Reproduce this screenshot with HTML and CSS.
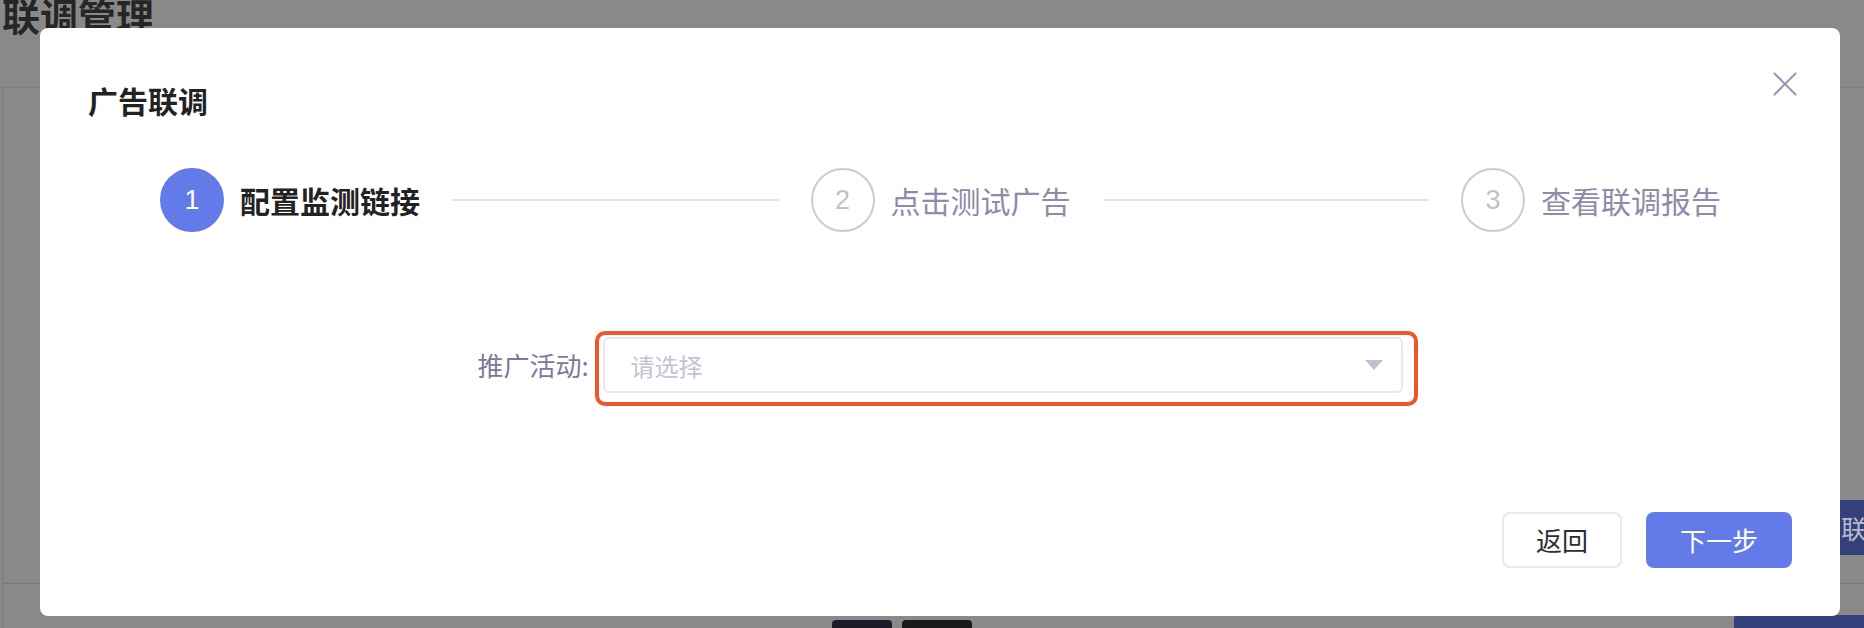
FILE: index.html
```html
<!DOCTYPE html>
<html lang="zh-CN">
<head>
<meta charset="utf-8">
<title>联调管理</title>
<link rel="stylesheet" href="styles.css">
</head>
<body>
<div class="page">
  <h1 class="page-title">联调管理</h1>
  <div class="card">
    <div class="toolbar">
      <button class="bg-btn">联调报告</button>
    </div>
    <div class="bg-row"></div>
    <div class="bg-bottom">
      <span class="bg-dark bg-dark-a"></span>
      <span class="bg-dark bg-dark-b"></span>
      <span class="bg-blue"></span>
    </div>
  </div>

  <div class="modal">
    <h2 class="modal-title">广告联调</h2>
    <span class="close" aria-label="关闭">
      <svg width="24" height="24" viewBox="0 0 24 24"><path d="M1.5 1.5 L22.5 22.5 M22.5 1.5 L1.5 22.5" stroke="#9896b4" stroke-width="2" fill="none" stroke-linecap="round"/></svg>
    </span>

    <div class="steps">
      <div class="step active">
        <span class="step-num">1</span>
        <span class="step-label">配置监测链接</span>
      </div>
      <div class="step-line"></div>
      <div class="step">
        <span class="step-num">2</span>
        <span class="step-label">点击测试广告</span>
      </div>
      <div class="step-line"></div>
      <div class="step">
        <span class="step-num">3</span>
        <span class="step-label">查看联调报告</span>
      </div>
    </div>

    <div class="form-row">
      <label class="form-label">推广活动:</label>
      <div class="select">
        <span class="placeholder">请选择</span>
        <span class="caret"></span>
        <span class="highlight"></span>
      </div>
    </div>

    <div class="footer">
      <button class="btn btn-default">返回</button>
      <button class="btn btn-primary">下一步</button>
    </div>
  </div>
</div>
</body>
</html>
```

FILE: styles.css
```css
* { box-sizing: border-box; }

html, body {
  margin: 0;
  padding: 0;
}

body {
  width: 1864px;
  height: 628px;
  overflow: hidden;
  background: #898989;
  font-family: "Noto Sans CJK SC", "Liberation Sans", sans-serif;
}

.page {
  position: relative;
  width: 1864px;
  height: 628px;
  overflow: hidden;
}

.page-title {
  margin: -4px 0 0 2px;
  font-size: 38px;
  line-height: 38px;
  font-weight: 700;
  color: #262626;
}

.card {
  margin-top: 53px;
  margin-left: 2px;
  border-top: 1px solid #7c7c7c;
  border-left: 1px solid #7c7c7c;
  height: 600px;
}

.toolbar {
  display: flex;
  padding-top: 412px;
  padding-left: 1826px;
}

.bg-btn {
  flex: none;
  height: 55px;
  padding: 0 12px;
  border: 0;
  border-radius: 4px;
  background: #34407a;
  color: #b7b9ca;
  font-family: inherit;
  font-size: 26px;
  white-space: nowrap;
}

.bg-row {
  height: 29px;
  border-bottom: 1px solid #777;
}

.bg-bottom {
  display: flex;
  align-items: flex-start;
  padding-top: 31px;
  padding-left: 829px;
  gap: 10px;
}

.bg-dark {
  height: 20px;
  margin-top: 5px;
  border-radius: 4px 4px 0 0;
}

.bg-dark-a { width: 60px; background: #1c1c28; }
.bg-dark-b { width: 70px; background: #1a1a1a; }

.bg-blue {
  margin-left: auto;
  width: 130px;
  height: 20px;
  background: #34407a;
  border-radius: 4px 0 0 0;
}

/* modal */
.modal {
  position: absolute;
  left: 40px;
  top: 28px;
  width: 1800px;
  height: 588px;
  background: #fff;
  border-radius: 8px;
  padding: 57px 48px 48px;
  display: flex;
  flex-direction: column;
}

.modal-title {
  margin: 0;
  font-size: 30px;
  line-height: 30px;
  font-weight: 700;
  color: #222;
}

.close {
  position: absolute;
  right: 43px;
  top: 44px;
  width: 24px;
  height: 24px;
  display: block;
}

.close svg { display: block; }

.steps {
  margin-top: 53px;
  padding: 0 71px 0 72px;
  display: flex;
  align-items: center;
  height: 64px;
}

.step {
  display: flex;
  align-items: center;
  flex: none;
}

.step-num {
  width: 64px;
  height: 64px;
  border-radius: 50%;
  border: 2px solid #cbcbcb;
  color: #c2c2c2;
  font-family: "Liberation Sans", sans-serif;
  font-size: 27px;
  display: flex;
  align-items: center;
  justify-content: center;
}

.step-label {
  margin-left: 16px;
  width: 180px;
  font-size: 30px;
  line-height: 30px;
  color: #8e8ca8;
  white-space: nowrap;
}

.step.active .step-num {
  background: #627be8;
  border-color: #627be8;
  color: #fff;
}

.step.active .step-label {
  color: #222;
  font-weight: 700;
}

.step-line {
  flex: 1;
  height: 2px;
  margin: 0 32px;
  background: #e2e4f0;
}

.form-row {
  margin-top: 105px;
  display: flex;
  align-items: center;
  justify-content: center;
}

.form-label {
  font-size: 26px;
  line-height: 30px;
  color: #7c7a98;
  margin-right: 14px;
  white-space: nowrap;
}

.select {
  position: relative;
  width: 800px;
  height: 56px;
  border: 2px solid #e6e7f2;
  border-radius: 6px;
  display: flex;
  align-items: center;
  padding: 0 18px 0 26px;
}

.placeholder {
  flex: 1;
  font-size: 24px;
  color: #c3c2d3;
}

.caret {
  width: 0;
  height: 0;
  border-left: 9px solid transparent;
  border-right: 9px solid transparent;
  border-top: 10px solid #c2c1d2;
}

.highlight {
  position: absolute;
  left: -10px;
  top: -8px;
  right: -17px;
  bottom: -15px;
  border: 4px solid #f0552b;
  border-radius: 10px;
  pointer-events: none;
}

.footer {
  margin-top: auto;
  display: flex;
  justify-content: flex-end;
  gap: 24px;
}

.btn {
  height: 56px;
  border-radius: 8px;
  font-family: inherit;
  font-size: 26px;
  line-height: 1;
  cursor: pointer;
}

.btn-default {
  width: 120px;
  background: #fff;
  border: 2px solid #e6e8f4;
  color: #2c2c34;
}

.btn-primary {
  width: 146px;
  background: #627be8;
  border: 0;
  color: #fff;
}
```
